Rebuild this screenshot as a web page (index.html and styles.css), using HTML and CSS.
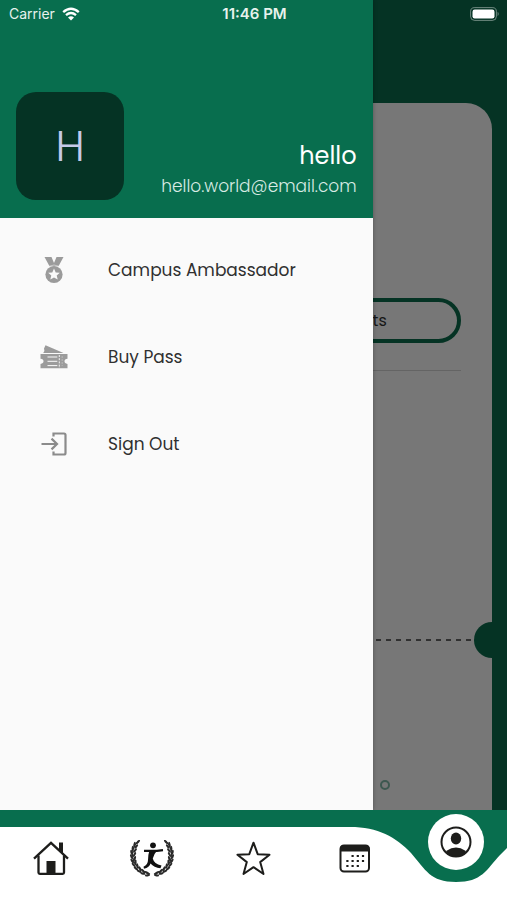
FILE: index.html
```html
<!DOCTYPE html>
<html lang="en">
<head>
<meta charset="utf-8">
<meta name="viewport" content="width=device-width, initial-scale=1">
<title>Account</title>
<link rel="stylesheet" href="styles.css">
</head>
<body>
<div class="screen">
  <header class="status">
    <div class="status-left">
      <span>Carrier</span>
      <svg class="wifi" viewBox="0 0 18 14" aria-hidden="true">
        <path d="M1.2 5.2Q9-1.6 16.8 5.2M4 8.2Q9 4 14 8.2" fill="none" stroke="currentColor" stroke-width="2.4"/>
        <path d="M6 10.4Q9 8.2 12 10.4L9 13.6Z" fill="currentColor"/>
      </svg>
    </div>
    <time class="clock">11:46 PM</time>
    <svg class="battery" viewBox="0 0 30 14" aria-hidden="true">
      <rect x=".6" y=".6" width="25.8" height="12.8" rx="4" fill="none" stroke="#fff" stroke-opacity=".42"/>
      <rect x="2.5" y="2.5" width="22" height="9" rx="2.2" fill="#fff"/>
      <path d="M27.6 4.8q2.2 2.2 0 4.4z" fill="#fff" fill-opacity=".42"/>
    </svg>
  </header>

  <main class="backdrop">
    <section class="card">
      <div class="card-top">
        <button class="pill" type="button">Events</button>
        <hr class="rule">
      </div>
      <div class="tear">
        <svg class="dashes" aria-hidden="true"><line x1="0" y1="1" x2="100%" y2="1"/></svg>
        <span class="notch"></span>
      </div>
      <div class="card-bottom"><span class="dot"></span></div>
    </section>
  </main>

  <aside class="drawer">
    <div class="profile">
      <div class="avatar">H</div>
      <div class="who">
        <div class="name">hello</div>
        <div class="email">hello.world@email.com</div>
      </div>
    </div>
    <nav class="menu" aria-label="Account">
      <a class="item" href="#ambassador">
        <svg class="item-icon" viewBox="0 0 28 28" aria-hidden="true">
          <path d="M4.5 1h7l2.5 6 2.5-6h7l-5 9.2h-9z" fill="#9b9b9b"/>
          <circle cx="14" cy="18.500" r="8.600" fill="#9b9b9b"/>
          <path d="M14 12.600l1.700 3.900 4.100.3-3.100 2.700 1 4-3.700-2.100-3.700 2.100 1-4-3.100-2.700 4.100-.3z" fill="#fafafa"/>
          <path d="M9 10.300Q14 7.700 19 10.300" fill="none" stroke="#fafafa" stroke-width=".5"/>
        </svg>
        <span>Campus Ambassador</span>
      </a>
      <a class="item" href="#pass">
        <svg class="item-icon" viewBox="0 0 28 28" aria-hidden="true">
          <path d="M5.500 2.200L23.500 10H3.200Q5.200 8 4 5.400z" fill="#9b9b9b"/>
          <path d="M.5 11h27v4.700q-3 .2-3 2.600t3 2.600v4.300H.5v-4.300q3-.2 3-2.600t-3-2.600z" fill="#9b9b9b"/>
          <path d="M7.500 14h9.800M7.500 18.300h9.800M7.500 22.600h9.800" stroke="#fafafa" stroke-width="1"/>
          <path d="M19.300 12v13" stroke="#fafafa" stroke-width=".9" stroke-dasharray="2 1.200"/>
          <path d="M22.200 13.500v9.500" stroke="#fafafa" stroke-width=".6" stroke-dasharray="1 2"/>
        </svg>
        <span>Buy Pass</span>
      </a>
      <a class="item" href="#signout">
        <svg class="item-icon" viewBox="0 0 28 28" aria-hidden="true">
          <path d="M13.500 6.500V3.500H24Q25.500 3.500 25.500 5V23Q25.500 24.500 24 24.500H13.500V21.500M1.500 14h15M11.500 8.600L17 14l-5.500 5.400" fill="none" stroke="#8b8b8b" stroke-width="2.200"/>
        </svg>
        <span>Sign Out</span>
      </a>
    </nav>
  </aside>

  <nav class="tabs" aria-label="Main">
    <svg class="wave" viewBox="0 0 507 90" preserveAspectRatio="none" aria-hidden="true">
      <path d="M0 17H350C378 17 396 27 411 43C426 60 430 72 456 72C482 72 486 60 500 45L507 38V90H0Z" fill="#fff"/>
    </svg>
    <a class="tab" href="#home" aria-label="Home">
      <svg class="tab-icon" viewBox="0 0 36 36" fill="none" stroke="#1d1d1b" aria-hidden="true">
        <path d="M1 18.600L18 2.800 35 18.600" stroke-width="2.300"/>
        <path d="M5.500 15.500V32.500q0 1.300 1.300 1.300H29.700q1.300 0 1.300-1.300V15.500" stroke-width="2.300"/>
        <path d="M26 2.500h4v11L26 9.500z" fill="#1d1d1b" stroke="none"/>
        <rect x="13.500" y="21" width="9" height="13" fill="#1d1d1b" stroke="none"/>
      </svg>
    </a>
    <a class="tab" href="#fest" aria-label="Festival">
      <svg class="tab-icon crest" viewBox="0 0 46 38" aria-hidden="true">
        <defs>
          <ellipse id="leaf" rx="2.700" ry="1.100"/>
          <g id="branch" fill="#2a2a2a">
            <path d="M9.500 1Q2 7.500 3.800 18T21 34" fill="none" stroke="#2a2a2a" stroke-width="1.200"/>
            <use href="#leaf" transform="translate(9 2) rotate(-48)"/>
            <use href="#leaf" transform="translate(5.500 4.500) rotate(-75)"/>
            <use href="#leaf" transform="translate(7.200 6.500) rotate(-50)"/>
            <use href="#leaf" transform="translate(3.700 8.500) rotate(-88)"/>
            <use href="#leaf" transform="translate(6 10.500) rotate(-50)"/>
            <use href="#leaf" transform="translate(2.500 12.500) rotate(75)"/>
            <use href="#leaf" transform="translate(5.500 14.500) rotate(-60)"/>
            <use href="#leaf" transform="translate(2.500 16.800) rotate(65)"/>
            <use href="#leaf" transform="translate(5.700 18.500) rotate(-70)"/>
            <use href="#leaf" transform="translate(3.200 21) rotate(55)"/>
            <use href="#leaf" transform="translate(6.500 22.300) rotate(-85)"/>
            <use href="#leaf" transform="translate(4.700 25) rotate(45)"/>
            <use href="#leaf" transform="translate(8.400 25.800) rotate(80)"/>
            <use href="#leaf" transform="translate(7 28.500) rotate(35)"/>
            <use href="#leaf" transform="translate(11 28.800) rotate(65)"/>
            <use href="#leaf" transform="translate(10.200 31.300) rotate(25)"/>
            <use href="#leaf" transform="translate(14.200 31) rotate(50)"/>
            <use href="#leaf" transform="translate(14 33.600) rotate(12)"/>
            <use href="#leaf" transform="translate(18 32.800) rotate(32)"/>
            <use href="#leaf" transform="translate(18.500 35.300) rotate(-10)"/>
          </g>
        </defs>
        <use href="#branch"/>
        <use href="#branch" transform="translate(46 0) scale(-1 1)"/>
        <circle cx="24" cy="5.300" r="2.900" fill="#111"/>
        <path d="M15 10.800H28L34 10.200" fill="none" stroke="#111" stroke-width="2.200"/>
        <path d="M20.500 10H28.500Q24.500 14.500 23.800 18.500 25 24 32.500 25.500L31.500 28.200Q25 27.500 21.500 23.500 20.500 27.500 15 28.800L14.500 26.700Q19 24.500 19 20 19 15 20.500 10Z" fill="#111"/>
      </svg>
    </a>
    <a class="tab" href="#favourites" aria-label="Favourites">
      <svg class="tab-icon" viewBox="0 0 36 36" aria-hidden="true">
        <path d="M18.500 2.700L22.700 14.200 34.500 14.700 25.200 22.100 28.500 34 18.500 27.200 8.500 34 11.800 22.100 2.500 14.700 14.300 14.200Z" fill="none" stroke="#1d1d1b" stroke-width="2" stroke-linejoin="round"/>
      </svg>
    </a>
    <a class="tab" href="#calendar" aria-label="Calendar">
      <svg class="tab-icon" viewBox="0 0 36 36" aria-hidden="true">
        <rect x="3.500" y="5.500" width="28.500" height="26" rx="3.500" fill="none" stroke="#1d1d1b" stroke-width="2"/>
        <path d="M3 11.500V8.500q0-3.500 3.500-3.500H29Q32.500 5 32.500 8.500v3z" fill="#1d1d1b"/>
        <path d="M14.500 16h14M9.300 21h19M9.300 26h13" stroke="#1d1d1b" stroke-width="2.200" stroke-dasharray="2.200 3"/>
      </svg>
    </a>
    <a class="tab active" href="#account" aria-label="Account" aria-current="page">
      <span class="bubble">
        <svg class="person" viewBox="0 0 32 32" aria-hidden="true">
          <clipPath id="face"><circle cx="16" cy="16" r="15"/></clipPath>
          <ellipse cx="16" cy="12.500" rx="5.200" ry="6" fill="#1d1d1b"/>
          <ellipse cx="16" cy="30.500" rx="12" ry="9" fill="#1d1d1b" clip-path="url(#face)"/>
          <circle cx="16" cy="16" r="14.500" fill="none" stroke="#1d1d1b" stroke-width="2"/>
        </svg>
      </span>
    </a>
  </nav>
</div>
</body>
</html>
```

FILE: styles.css
```css
* {
  box-sizing: border-box;
}

body {
  margin: 0;
  font-family: Poppins, Inter, "Open Sans", sans-serif;
  color: #303030;
}

a {
  color: inherit;
  text-decoration: none;
}

.screen {
  position: relative;
  display: grid;
  grid-template-rows: 1fr 90px;
  min-height: 100vh;
  background: #053324;
}

/* Status bar, drawn above the drawer */
.status {
  position: absolute;
  inset: 0 0 auto;
  z-index: 3;
  display: grid;
  grid-template-columns: 1fr auto 1fr;
  align-items: center;
  height: 27px;
  padding: 0 7px 0 9px;
  font-family: Inter, sans-serif;
  font-size: 14px;
  color: #e6f2ed;
}

.status-left {
  display: flex;
  align-items: center;
  gap: 7px;
}

.wifi {
  width: 18px;
  height: 14px;
  color: #fff;
}

.clock {
  font-size: 15px;
  font-weight: 600;
}

.battery {
  justify-self: end;
  width: 30px;
  height: 14px;
}

/* Dimmed page behind the drawer */
.backdrop {
  grid-area: 1 / 1;
  display: flex;
  padding: 103px 15px 0 16px;
}

.card {
  flex: 1;
  display: flex;
  flex-direction: column;
  background: #777;
  border-radius: 26px 26px 0 0;
}

.card-top {
  flex: 1;
  display: flex;
  flex-direction: column;
  align-items: flex-end;
  padding: 195px 31px 0;
}

.pill {
  width: 200px;
  height: 45px;
  border: 4px solid #053324;
  border-radius: 23px;
  background: none;
  font-family: inherit;
  font-size: 16px;
  color: #161616;
}

.rule {
  width: 100%;
  height: 1px;
  margin: 27px 0 0;
  border: 0;
  background: #646464;
}

.tear {
  display: flex;
  align-items: center;
  height: 36px;
  padding-left: 20px;
}

.dashes {
  flex: 1;
  height: 2px;
}

.dashes line {
  stroke: #303030;
  stroke-width: 2;
  stroke-dasharray: 5 5;
}

.notch {
  width: 18px;
  height: 36px;
  border-radius: 18px 0 0 18px;
  background: #053324;
}

.card-bottom {
  display: flex;
  justify-content: flex-end;
  height: 152px;
  padding: 122px 102px 0 0;
}

.dot {
  width: 10px;
  height: 10px;
  border: 2px solid #3d5850;
  border-radius: 50%;
}

/* Drawer */
.drawer {
  grid-area: 1 / 1;
  z-index: 1;
  width: 73.5%;
  background: #fafafa;
  box-shadow: 0 0 4px rgb(0 0 0 / 30%);
}

.profile {
  display: flex;
  align-items: flex-end;
  justify-content: space-between;
  height: 218px;
  padding: 0 16px 18px;
  background: #086e4e;
}

.avatar {
  display: grid;
  place-items: center;
  width: 108px;
  height: 108px;
  border-radius: 20px;
  background: #053324;
  font-size: 43px;
  font-weight: 300;
  color: #c5cae9;
}

.who {
  text-align: right;
}

.name {
  font-size: 24px;
  line-height: 32px;
  color: #fff;
}

.email {
  font-size: 17px;
  line-height: 28px;
  font-weight: 300;
  color: #d8ebe4;
}

.menu {
  display: flex;
  flex-direction: column;
  padding-top: 8px;
}

.item {
  display: flex;
  align-items: center;
  gap: 40px;
  height: 87px;
  padding-left: 40px;
  font-size: 17px;
}

.item-icon {
  width: 28px;
  height: 28px;
}

/* Tab bar */
.tabs {
  position: relative;
  grid-row: 2;
  z-index: 2;
  display: grid;
  grid-template-columns: repeat(5, 1fr);
  background: #086e4e;
}

.wave {
  position: absolute;
  inset: 0;
  width: 100%;
  height: 100%;
}

.tab {
  position: relative;
  display: flex;
  align-items: flex-start;
  justify-content: center;
  padding-top: 30px;
}

.tab-icon {
  width: 36px;
  height: 36px;
}

.crest {
  width: 46px;
  height: 38px;
}

.tab.active {
  padding-top: 4px;
}

.bubble {
  display: grid;
  place-items: center;
  width: 56px;
  height: 56px;
  border-radius: 50%;
  background: #fff;
}

.person {
  width: 32px;
  height: 32px;
}
```
